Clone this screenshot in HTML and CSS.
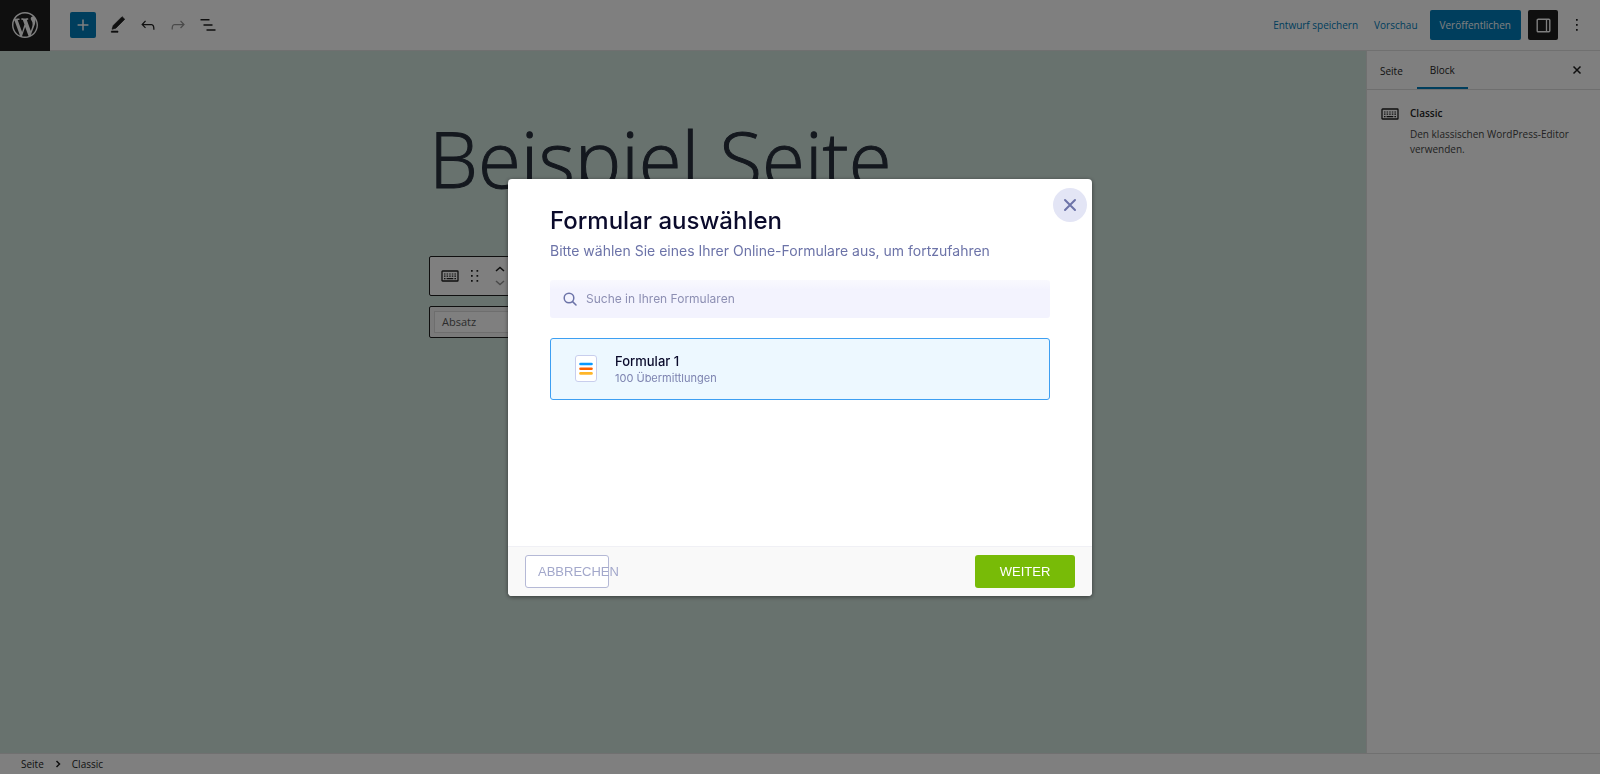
FILE: index.html
```html
<!DOCTYPE html>
<html lang="de">
<head>
<meta charset="utf-8">
<title>Beispiel Seite bearbeiten</title>
<link rel="stylesheet" href="styles.css">
</head>
<body>
<svg class="sprite" aria-hidden="true">
  <symbol id="keyboard" viewBox="0 0 18 12">
    <rect x="1" y="1" width="16" height="10" rx="0.6" fill="none" stroke="currentColor" stroke-width="1.3"/>
    <path d="M3 4h1.5M5.6 4h1.5M8.2 4h1.5M10.8 4h1.5M13.4 4H15M3 6.2h1.5M5.6 6.2h1.5M8.2 6.2h1.5M10.8 6.2h1.5M13.4 6.2H15M3 8.6h1.5M5.6 8.6h6.7M13.4 8.6H15" stroke="currentColor" stroke-width="1.2" fill="none"/>
  </symbol>
</svg>
<div class="app">
  <header class="topbar">
    <a class="logo" href="#" aria-label="Seiten anzeigen">
      <svg viewBox="0 0 20 20" width="26" height="26" fill="currentColor"><path d="M20 10c0-5.51-4.49-10-10-10C4.48 0 0 4.49 0 10c0 5.52 4.48 10 10 10 5.51 0 10-4.48 10-10zM7.78 15.37L4.37 6.22c.55-.02 1.17-.08 1.17-.08.5-.06.44-1.13-.06-1.11 0 0-1.45.11-2.37.11-.18 0-.37 0-.58-.01C4.12 2.69 6.87 1.11 10 1.11c2.33 0 4.45.87 6.05 2.34-.68-.11-1.65.39-1.65 1.58 0 .74.45 1.36.9 2.1.35.61.55 1.36.55 2.46 0 1.49-1.4 5-1.4 5l-3.03-8.37c.54-.02.82-.17.82-.17.5-.05.44-1.25-.06-1.22 0 0-1.44.12-2.38.12-.87 0-2.33-.12-2.33-.12-.5-.03-.56 1.2-.06 1.22l.92.08 1.26 3.41zM17.41 10c.24-.64.74-1.87.43-4.25.7 1.29 1.05 2.71 1.05 4.25 0 3.29-1.73 6.24-4.4 7.78.97-2.59 1.94-5.2 2.92-7.78zM6.1 18.09C3.12 16.65 1.11 13.53 1.11 10c0-1.3.23-2.48.72-3.59C3.25 10.3 4.67 14.2 6.1 18.09zm4.03-6.63l2.58 6.98c-.86.29-1.76.45-2.71.45-.79 0-1.57-.11-2.29-.33.81-2.38 1.62-4.74 2.42-7.1z"/></svg>
    </a>
    <div class="tools">
      <button class="tool tool-add" aria-label="Block hinzufügen"><svg viewBox="0 0 24 24" width="20" height="20"><path d="M12 5.500v13M5.500 12h13" stroke="currentColor" stroke-width="1.800"/></svg></button>
      <button class="tool" aria-label="Werkzeuge"><svg viewBox="0 0 24 24" width="20" height="20" fill="currentColor"><path d="M20.100 5.100L16.900 2 6.200 12.700l-1.300 4.400 4.500-1.300L20.100 5.100zM4 20.800h8v-1.500H4v1.500z" stroke="currentColor" stroke-width="0.800"/></svg></button>
      <button class="tool" aria-label="Rückgängig"><svg viewBox="0 0 24 24" width="20" height="20" fill="currentColor"><path d="M18.300 11.700c-.6-.6-1.400-.9-2.300-.9H6.700l2.900-3.300-1.100-1-4.500 5L8.500 16l1-1-2.700-2.700H16c.5 0 .9.2 1.300.5 1 1 1 3.400 1 4.500v.3h1.500v-.2c0-1.500 0-4.300-1.500-5.700z"/></svg></button>
      <button class="tool" aria-label="Wiederholen" disabled><svg viewBox="0 0 24 24" width="20" height="20" fill="currentColor"><path d="M15.600 6.500l-1.100 1 2.900 3.300H8c-.9 0-1.700.3-2.300.9-1.400 1.500-1.400 4.200-1.400 5.600v.2h1.500v-.3c0-1.100 0-3.500 1-4.500.3-.3.7-.5 1.300-.5h9.200L14.500 15l1.100 1.100 4.600-4.600-4.600-5z"/></svg></button>
      <button class="tool" aria-label="Dokumentübersicht"><svg viewBox="0 0 20 20" width="20" height="20"><path d="M2.500 4.800h9M5.500 9.900h9M8.500 15h9" stroke="currentColor" stroke-width="1.500"/></svg></button>
    </div>
    <div class="actions">
      <button class="link">Entwurf speichern</button>
      <button class="link">Vorschau</button>
      <button class="publish">Veröffentlichen</button>
      <button class="settings" aria-label="Einstellungen"><svg viewBox="0 0 15 15" width="15" height="15"><rect x="1.200" y="1.200" width="12.600" height="12.600" rx="1" fill="none" stroke="currentColor" stroke-width="1.400"/><path d="M10.500 1v13" stroke="currentColor" stroke-width="1.300"/></svg></button>
      <button class="more" aria-label="Optionen"><svg viewBox="0 0 4 14" width="4" height="14" fill="currentColor"><path d="M1 1h1.700v1.700H1zM1 6h1.700v1.700H1zM1 11h1.700v1.700H1z"/></svg></button>
    </div>
  </header>

  <main class="canvas">
    <div class="column">
      <h1 class="page-title">Beispiel Seite</h1>
      <div class="block-toolbar">
        <button aria-label="Classic"><svg width="18" height="12"><use href="#keyboard"/></svg></button>
        <button aria-label="Ziehen"><svg viewBox="0 0 8 14" width="8" height="14" fill="currentColor"><path d="M0 1h1.700v1.700H0zM5.500 1h1.700v1.700H5.500zM0 6h1.700v1.700H0zM5.500 6h1.700v1.700H5.500zM0 11h1.700v1.700H0zM5.500 11h1.700v1.700H5.500z"/></svg></button>
        <span class="movers">
          <button aria-label="Nach oben"><svg viewBox="0 0 10 6" width="10" height="6" fill="none" stroke="currentColor" stroke-width="1.500"><path d="M1 5l4-3.600L9 5"/></svg></button>
          <button aria-label="Nach unten" disabled><svg viewBox="0 0 10 6" width="10" height="6" fill="none" stroke="currentColor" stroke-width="1.500"><path d="M1 1l4 3.600L9 1"/></svg></button>
        </span>
      </div>
      <div class="classic-block"><button class="format">Absatz</button></div>
    </div>
  </main>

  <aside class="sidebar">
    <div class="tabs">
      <button class="tab">Seite</button>
      <button class="tab tab-active">Block</button>
      <button class="sidebar-close" aria-label="Einstellungen schließen"><svg viewBox="0 0 10 10" width="10" height="10" stroke="currentColor" stroke-width="1.500"><path d="M1.500 1.500l7 7M8.500 1.500l-7 7"/></svg></button>
    </div>
    <section class="card">
      <svg class="card-icon" width="18" height="12"><use href="#keyboard"/></svg>
      <div>
        <h2 class="card-title">Classic</h2>
        <p class="card-text">Den klassischen WordPress-Editor verwenden.</p>
      </div>
    </section>
  </aside>

  <footer class="crumbs">
    <button>Seite</button>
    <svg viewBox="0 0 6 8" width="6" height="8" fill="none" stroke="currentColor" stroke-width="1.500"><path d="M1.500 1l3 3-3 3"/></svg>
    <span>Classic</span>
  </footer>
</div>

<div class="overlay">
  <div class="modal" role="dialog" aria-modal="true" aria-labelledby="modal-title">
    <button class="modal-close" aria-label="Schließen"><svg viewBox="0 0 14 14" width="14" height="14" stroke="currentColor" stroke-width="2" stroke-linecap="round"><path d="M2 2l10 10M12 2L2 12"/></svg></button>
    <div class="modal-body">
      <h2 class="modal-title" id="modal-title">Formular auswählen</h2>
      <p class="modal-subtitle">Bitte wählen Sie eines Ihrer Online-Formulare aus, um fortzufahren</p>
      <label class="search">
        <svg viewBox="0 0 14 14" width="14" height="14" fill="none" stroke="currentColor" stroke-width="1.500" stroke-linecap="round"><circle cx="6" cy="6" r="4.800"/><path d="M9.600 9.600l3.400 3.400"/></svg>
        <input type="search" placeholder="Suche in Ihren Formularen" aria-label="Suche in Ihren Formularen">
      </label>
      <button class="form-item" aria-pressed="true">
        <svg viewBox="0 0 22 27" width="22" height="27"><rect x="0.500" y="0.500" width="21" height="26" rx="2.500" fill="#fff" stroke="#c8ceed"/><g stroke-width="2.600" stroke-linecap="round"><path d="M5.500 9h11" stroke="#0a99ff"/><path d="M5.500 13.700h11" stroke="#ff6100"/><path d="M5.500 18.400h11" stroke="#ffb629"/></g></svg>
        <span class="form-info"><span class="form-name">Formular 1</span><span class="form-count">100 Übermittlungen</span></span>
      </button>
    </div>
    <div class="modal-footer">
      <button class="cancel">ABBRECHEN</button>
      <button class="next">WEITER</button>
    </div>
  </div>
</div>
</body>
</html>
```
FILE: styles.css
```css
* { box-sizing: border-box; }
body { margin: 0; font-family: "Open Sans", "Noto Sans", sans-serif; font-size: 10px; line-height: 15px; color: #1e1e1e; }
button { margin: 0; padding: 0; border: 0; background: none; font: inherit; color: inherit; }
h1, h2, p { margin: 0; }
svg { display: block; flex: none; }
.sprite { position: absolute; width: 0; height: 0; }

.app { display: grid; grid-template: 51px minmax(0, 1fr) 21px / minmax(0, 1fr) 234px; height: 100vh; background: #fff; }

.topbar { grid-column: 1 / -1; display: flex; align-items: center; border-bottom: 1px solid #e0e0e0; }
.logo { display: grid; place-items: center; width: 50px; height: 51px; background: #1e1e1e; color: #fff; }
.tools { display: flex; align-items: center; gap: 4px; margin-left: 20px; }
.tool { display: grid; place-items: center; width: 26px; height: 26px; }
.tool:disabled { color: #949494; }
.tool-add { margin-right: 5px; border-radius: 2px; background: #007cba; color: #fff; }
.actions { display: flex; align-items: center; margin-left: auto; padding-right: 11px; }
.link { margin-right: 16px; color: #007cba; }
.link + .link { margin-right: 12px; }
.publish { height: 30px; padding: 0 10px; border-radius: 2px; background: #007cba; color: #fff; font-weight: 500; }
.settings { display: grid; place-items: center; width: 30px; height: 30px; margin: 0 7px; border-radius: 2px; background: #1e1e1e; color: #fff; }
.more { display: grid; place-items: center; width: 24px; height: 24px; }

.canvas { overflow: hidden; background: #d1e4dd; color: #28303d; }
.column { max-width: 508px; margin: 0 auto; padding-top: 57px; }
.page-title { font-size: 78px; line-height: 100px; font-weight: 300; -webkit-text-stroke: 1px currentColor; white-space: nowrap; }
.block-toolbar { display: flex; align-items: center; gap: 12px; height: 40px; margin-top: 48px; padding: 0 11px; border: 1px solid #1e1e1e; border-radius: 2px; background: #fff; color: #1e1e1e; }
.movers { display: grid; gap: 8px; margin-left: 4px; }
.movers button:disabled { color: #949494; }
.classic-block { margin-top: 10px; padding: 4px; border: 1px solid #1e1e1e; border-radius: 2px; background: #f5f5f5; }
.format { display: block; width: 140px; height: 22px; padding: 0 7px 2px; border: 1px solid #ddd; background: #fff; color: #595959; font-size: 11px; text-align: left; }

.sidebar { border-left: 1px solid #e0e0e0; }
.tabs { display: flex; height: 39px; border-bottom: 1px solid #ddd; }
.tab { padding: 2px 14px 0 13px; }
.tab-active { padding: 2px 13px 0; border-bottom: 2px solid #007cba; }
.sidebar-close { margin-left: auto; padding: 0 18px; }
.card { display: flex; gap: 11px; padding: 16px; }
.card-icon { margin: 2px 0 0 -2px; }
.card-title { margin-bottom: 6px; font-size: 10px; font-weight: 600; }
.card-text { color: #444; }

.crumbs { grid-column: 1 / -1; display: flex; align-items: center; gap: 11px; padding-left: 21px; border-top: 1px solid #e0e0e0; }

.overlay { position: fixed; inset: 0; display: grid; place-items: center; background: rgba(0, 0, 0, 0.5); }
.modal { position: relative; display: flex; flex-direction: column; width: 584px; max-width: 100%; min-height: 417px; border-radius: 4px; background: #fff; color: #0a1551; box-shadow: 0 1px 4px rgba(0, 0, 0, 0.5); font-family: Inter, sans-serif; overflow: hidden; }
.modal-close { position: absolute; top: 9px; right: 5px; display: grid; place-items: center; width: 34px; height: 34px; border-radius: 50%; background: #e3e5f5; color: #6c73a8; }
.modal-body { flex: 1; padding: 26px 42px; }
.modal-title { font-size: 24px; line-height: 32px; font-weight: 500; color: #0a0a2b; }
.modal-subtitle { margin: 4px 0 19px; font-size: 14px; line-height: 20px; color: #6c73a8; }
.search { display: flex; align-items: center; gap: 9px; height: 38px; padding: 0 13px; border-radius: 3px; background: linear-gradient(#f9f9fe, #f3f3fe 10px); color: #6c73a8; }
.search input { flex: 1; min-width: 0; padding: 0; border: 0; outline: 0; background: none; font: 12px/20px Inter, sans-serif; color: #0a1551; }
.search input::placeholder { color: #8d8fb3; }
.form-item { display: flex; align-items: center; gap: 18px; width: 100%; height: 62px; margin-top: 20px; padding: 0 24px; border: 1px solid #3d9ff2; border-radius: 3px; background: #edf8ff; text-align: left; }
.form-info { display: grid; }
.form-name { font-size: 13px; line-height: 18px; font-weight: 500; color: #0a0a2b; }
.form-count { font-size: 11px; line-height: 16px; color: #7d83b0; }
.modal-footer { display: flex; align-items: center; justify-content: space-between; height: 50px; padding: 0 17px; border-top: 1px solid #f0f0f5; background: #f9f9f9; font-family: "Liberation Sans", sans-serif; font-size: 13px; }
.cancel { width: 84px; height: 33px; padding-left: 12px; border: 1px solid #b5b9d6; border-radius: 3px; background: #fff; color: #a3a8cb; text-align: left; white-space: nowrap; }
.next { width: 100px; height: 33px; border-radius: 3px; background: #78bb07; color: #fff; }
```
